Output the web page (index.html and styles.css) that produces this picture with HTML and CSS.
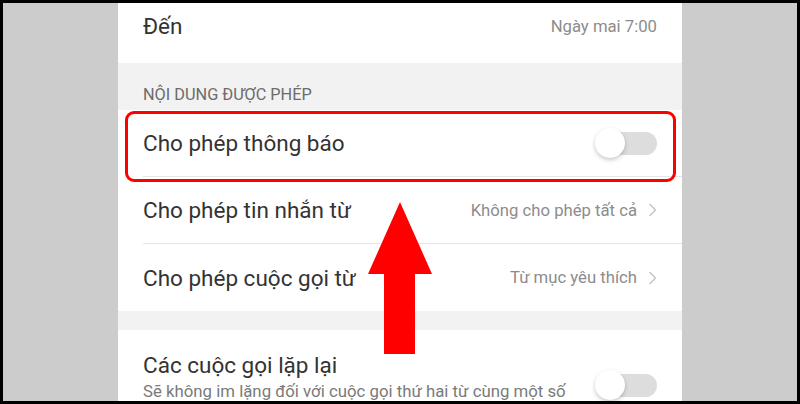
FILE: index.html
```html
<!DOCTYPE html>
<html lang="vi">
<head>
<meta charset="utf-8">
<link rel="stylesheet" href="styles.css">
</head>
<body>
<div class="frame">
  <div class="panel">
    <div class="row row-top">
      <span class="label">Đến</span>
      <span class="value">Ngày mai 7:00</span>
    </div>
    <div class="section-head">NỘI DUNG ĐƯỢC PHÉP</div>
    <div class="row row-item">
      <span class="label">Cho phép thông báo</span>
      <div class="toggle"><span class="track"></span><span class="knob"></span></div>
    </div>
    <div class="row row-item">
      <span class="label">Cho phép tin nhắn từ</span>
      <span class="value">Không cho phép tất cả<svg class="chev" width="9" height="14" viewBox="0 0 9 14"><path d="M1.5 1 L7.5 7 L1.5 13" fill="none" stroke="#bdbdbd" stroke-width="1.2"/></svg></span>
    </div>
    <div class="row row-item last">
      <span class="label">Cho phép cuộc gọi từ</span>
      <span class="value">Từ mục yêu thích<svg class="chev" width="9" height="14" viewBox="0 0 9 14"><path d="M1.5 1 L7.5 7 L1.5 13" fill="none" stroke="#bdbdbd" stroke-width="1.2"/></svg></span>
    </div>
    <div class="gap"></div>
    <div class="row row-repeat">
      <div class="texts">
        <div class="label">Các cuộc gọi lặp lại</div>
        <div class="sub">Sẽ không im lặng đối với cuộc gọi thứ hai từ cùng một số</div>
      </div>
      <div class="toggle toggle-low"><span class="track"></span><span class="knob"></span></div>
    </div>
    <div class="highlight"></div>
  </div>
  <svg class="arrow" width="800" height="404" viewBox="0 0 800 404">
    <polygon points="400,202 432,274 415,274 415,354 384,354 384,274 368,274" fill="#ff0000"/>
  </svg>
</div>
</body>
</html>
```

FILE: styles.css
```css
html, body {
  margin: 0;
  padding: 0;
  background: #000;
}
.frame {
  position: relative;
  width: 800px;
  height: 404px;
  box-sizing: border-box;
  border: 3px solid #000;
  background: #cccccc;
  display: flex;
  justify-content: center;
  overflow: hidden;
  font-family: Roboto, "Noto Sans", sans-serif;
}
.panel {
  position: relative;
  width: 564px;
  height: 398px;
  background: #fff;
  overflow: hidden;
}
.row {
  display: flex;
  align-items: center;
  justify-content: space-between;
  padding: 0 25px;
  box-sizing: border-box;
}
.label {
  font-size: 22.5px;
  color: #333;
  line-height: 26px;
  white-space: nowrap;
}
.value {
  display: flex;
  align-items: center;
  font-size: 16.7px;
  color: #8c8c8c;
  white-space: nowrap;
}
.chev {
  margin-left: 11px;
}
.row-top {
  height: 60px;
  padding-bottom: 14px;
}
.section-head {
  height: 47px;
  box-sizing: border-box;
  background: #f2f2f2;
  padding: 22px 25px 0;
  font-size: 16.3px;
  line-height: 20px;
  color: #6b6b6b;
  white-space: nowrap;
}
.row-item {
  height: 67px;
  margin-left: 25px;
  padding-left: 0;
  border-bottom: 1px solid #e6e6e6;
}
.row-item.last {
  border-bottom: none;
  height: 67px;
}
.gap {
  height: 19px;
  background: #f2f2f2;
}
.row-repeat {
  align-items: flex-start;
  padding-top: 22px;
}
.sub {
  margin-top: 3px;
  font-size: 16.8px;
  line-height: 20px;
  color: #7a7a7a;
  white-space: nowrap;
}
.toggle {
  position: relative;
  width: 62px;
  height: 30px;
  flex-shrink: 0;
}
.toggle-low {
  margin-top: 18px;
}
.track {
  position: absolute;
  left: 4px;
  right: 0;
  top: 3.5px;
  height: 23px;
  border-radius: 12px;
  background: #dddddd;
}
.knob {
  position: absolute;
  left: 0;
  top: 0;
  width: 30px;
  height: 30px;
  border-radius: 50%;
  background: #fff;
  box-shadow: 0 2px 4px rgba(0, 0, 0, 0.22);
}
.highlight {
  position: absolute;
  left: 7px;
  top: 108px;
  width: 551px;
  height: 71px;
  box-sizing: border-box;
  border: 3px solid #ff0000;
  border-radius: 9px;
}
.arrow {
  position: absolute;
  left: -3px;
  top: -3px;
}
```
